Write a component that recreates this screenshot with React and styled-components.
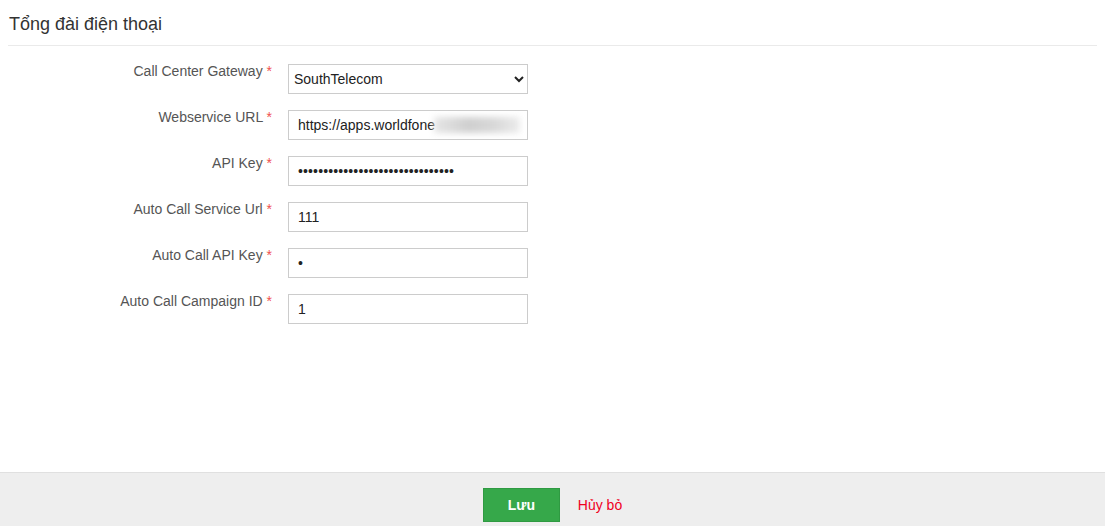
import React from "react";
import styled, { createGlobalStyle } from "styled-components";

const GlobalStyle = createGlobalStyle`
  html, body {
    margin: 0;
    padding: 0;
    background: #fff;
    font-family: "Liberation Sans", Arial, sans-serif;
  }
`;

const Page = styled.div`
  display: flex;
  flex-direction: column;
  height: 100vh;
`;

const Main = styled.div`
  flex: 1;
  padding: 0 8px;
`;

const Title = styled.h3`
  margin: 0;
  padding: 14px 1px 0;
  height: 31px;
  font-size: 18px;
  font-weight: normal;
  color: #333;
  border-bottom: 1px solid #eaeaea;
`;

const Form = styled.div`
  display: flex;
  flex-direction: column;
  gap: 12px;
  padding-top: 14px;
`;

const Row = styled.div`
  display: grid;
  grid-template-columns: 264px 240px;
  column-gap: 16px;
  align-items: start;
`;

const Label = styled.label`
  padding-top: 1px;
  text-align: right;
  font-size: 14px;
  line-height: 20px;
  color: #555;
`;

const Star = styled.span`
  color: #f05050;
`;

const Field = styled.div`
  position: relative;
  margin-top: 4px;
`;

const Input = styled.input`
  box-sizing: border-box;
  width: 240px;
  height: 30px;
  margin: 0;
  padding: 0 9px;
  border: 1px solid #ccc;
  border-radius: 0;
  font-family: "Liberation Sans", Arial, sans-serif;
  font-size: 14px;
  color: #222;
  outline: none;
  letter-spacing: ${(p) => (p.type === "password" ? "0.13px" : "normal")};
`;

const Select = styled.select`
  box-sizing: border-box;
  width: 240px;
  height: 30px;
  margin: 0;
  padding: 0 4px 0 1px;
  border: 1px solid #ccc;
  border-radius: 0;
  background: #fff;
  font-family: "Liberation Sans", Arial, sans-serif;
  font-size: 14px;
  color: #222;
`;

const Blur = styled.span`
  position: absolute;
  left: 146px;
  top: 7px;
  width: 86px;
  height: 16px;
  background: linear-gradient(90deg, #e6e6e6, #cfcfcf 40%, #d8d8d8 70%, #ececec);
  filter: blur(3px);
`;

const Footer = styled.div`
  display: flex;
  justify-content: center;
  align-items: flex-start;
  gap: 18px;
  padding-top: 15px;
  box-sizing: border-box;
  height: 54px;
  background: #eeeeee;
  border-top: 1px solid #e0e0e0;
`;

const SaveButton = styled.button`
  width: 77px;
  height: 34px;
  background: #36a84a;
  border: 1px solid #2f9a42;
  border-radius: 0;
  color: #fff;
  font-family: "Liberation Sans", Arial, sans-serif;
  font-size: 14px;
  font-weight: bold;
  cursor: pointer;
`;

const CancelLink = styled.a`
  font-size: 14px;
  line-height: 34px;
  color: #f0001e;
  text-decoration: none;
  cursor: pointer;
`;

const fields = [
  { label: "Webservice URL", value: "https://apps.worldfone", blur: true },
  { label: "API Key", value: "•".repeat(31), type: "password" },
  { label: "Auto Call Service Url", value: "111" },
  { label: "Auto Call API Key", value: "•", type: "password" },
  { label: "Auto Call Campaign ID", value: "1" },
];

const App = () => {
  return (
    <Page>
      <GlobalStyle />
      <Main>
        <Title>Tổng đài điện thoại</Title>
        <Form>
          <Row>
            <Label>
              Call Center Gateway <Star>*</Star>
            </Label>
            <Field>
              <Select defaultValue="SouthTelecom">
                <option>SouthTelecom</option>
              </Select>
            </Field>
          </Row>
          {fields.map((f) => (
            <Row key={f.label}>
              <Label>
                {f.label} <Star>*</Star>
              </Label>
              <Field>
                <Input type={f.type || "text"} defaultValue={f.value} readOnly />
                {f.blur && <Blur />}
              </Field>
            </Row>
          ))}
        </Form>
      </Main>
      <Footer>
        <SaveButton>Lưu</SaveButton>
        <CancelLink>Hủy bỏ</CancelLink>
      </Footer>
    </Page>
  );
};

export default App;
